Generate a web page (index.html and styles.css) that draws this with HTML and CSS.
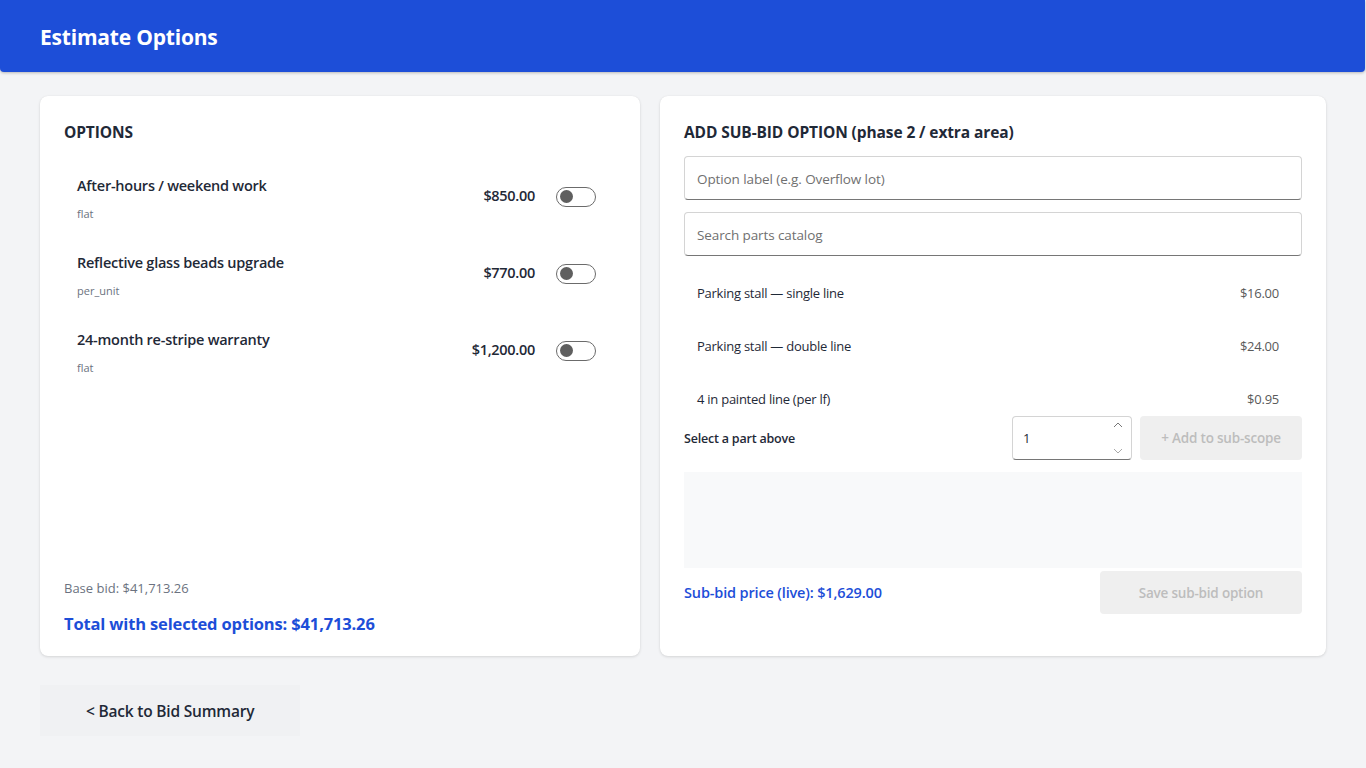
FILE: index.html
```html
<!DOCTYPE html>
<html>
<head>
<meta charset="utf-8">
<link rel="stylesheet" href="styles.css">
</head>
<body>
<header class="topbar"><h1>Estimate Options</h1></header>
<main class="content">
  <section class="card options-card">
    <h2 class="card-title">OPTIONS</h2>
    <div class="opt-list">
      <div class="opt-row">
        <div class="opt-info"><div class="opt-name">After-hours / weekend work</div><div class="opt-type">flat</div></div>
        <div class="opt-price">$850.00</div>
        <span class="toggle"><span class="knob"></span></span>
      </div>
      <div class="opt-row">
        <div class="opt-info"><div class="opt-name">Reflective glass beads upgrade</div><div class="opt-type">per_unit</div></div>
        <div class="opt-price">$770.00</div>
        <span class="toggle"><span class="knob"></span></span>
      </div>
      <div class="opt-row">
        <div class="opt-info"><div class="opt-name">24-month re-stripe warranty</div><div class="opt-type">flat</div></div>
        <div class="opt-price">$1,200.00</div>
        <span class="toggle"><span class="knob"></span></span>
      </div>
    </div>
    <div class="totals">
      <div class="base">Base bid: $41,713.26</div>
      <div class="total">Total with selected options: $41,713.26</div>
    </div>
  </section>
  <section class="card sub-card">
    <h2 class="card-title">ADD SUB-BID OPTION (phase 2 / extra area)</h2>
    <div class="field"><span class="ph">Option label (e.g. Overflow lot)</span></div>
    <div class="field"><span class="ph">Search parts catalog</span></div>
    <div class="parts">
      <div class="part"><span>Parking stall — single line</span><span class="pp">$16.00</span></div>
      <div class="part"><span>Parking stall — double line</span><span class="pp">$24.00</span></div>
      <div class="part"><span>4 in painted line (per lf)</span><span class="pp">$0.95</span></div>
    </div>
    <div class="add-row">
      <span class="sel">Select a part above</span>
      <div class="qty"><span>1</span>
        <span class="spin">
          <svg width="10" height="6" viewBox="0 0 10 6"><path d="M1 5 L5 1 L9 5" fill="none" stroke="#777" stroke-width="1"/></svg>
          <svg width="10" height="6" viewBox="0 0 10 6"><path d="M1 1 L5 5 L9 1" fill="none" stroke="#aaa" stroke-width="1"/></svg>
        </span>
      </div>
      <div class="btn-dis add-btn">+ Add to sub-scope</div>
    </div>
    <div class="scope-box"></div>
    <div class="save-row">
      <span class="live">Sub-bid price (live): $1,629.00</span>
      <div class="btn-dis save-btn">Save sub-bid option</div>
    </div>
  </section>
</main>
<div class="footer"><div class="back">&lt; Back to Bid Summary</div></div>
</body>
</html>
```
FILE: styles.css
```css
* { box-sizing: border-box; }
html, body { margin: 0; padding: 0; }
body {
  background: #f3f4f6;
  font-family: "Open Sans", "Noto Sans", sans-serif;
  color: #1f2937;
  width: 1366px;
  height: 768px;
  overflow: hidden;
}
.topbar {
  height: 72px;
  width: 1365px;
  background: #1d4ed8;
  border-radius: 0 0 4px 4px;
  box-shadow: 0 1px 3px rgba(0,0,0,0.25);
  display: flex;
  align-items: center;
  padding-left: 40px;
  padding-top: 2px;
}
.topbar h1 {
  margin: 0;
  color: #fff;
  font-size: 21px;
  font-weight: 700;
  letter-spacing: -0.2px;
}
.content {
  display: grid;
  grid-template-columns: 600px 666px;
  gap: 20px;
  padding: 24px 0 0 40px;
}
.card {
  background: #fff;
  border-radius: 8px;
  box-shadow: 0 1px 3px rgba(0,0,0,0.12), 0 0 1px rgba(0,0,0,0.08);
  height: 560px;
  padding: 24px;
}
.card-title {
  margin: 0;
  font-size: 15.5px;
  font-weight: 700;
  color: #1f2937;
  line-height: 24px;
  letter-spacing: -0.1px;
}
.options-card { display: flex; flex-direction: column; padding-bottom: 20px; }
.opt-list { padding: 0 20px 0 13px; margin-top: 28px; }
.opt-row {
  display: flex;
  height: 77px;
  align-items: flex-start;
}
.opt-info { flex: 1; }
.opt-name { font-size: 14.5px; font-weight: 600; line-height: 20px; color: #1f2937; padding-top: 4px; letter-spacing: -0.25px;}
.opt-type { font-size: 11px; color: #6b7280; margin-top: 11px; line-height: 14px; }
.opt-price { font-size: 14.5px; font-weight: 600; margin-top: 14px; margin-right: 21px; letter-spacing: -0.3px; }
.toggle {
  margin-top: 15px;
  width: 40px; height: 20px;
  border: 1.5px solid #6b6b6b;
  border-radius: 10px;
  position: relative;
  display: block;
}
.knob {
  position: absolute;
  left: 2.5px; top: 2px;
  width: 13px; height: 13px;
  border-radius: 50%;
  background: #5f5f5f;
}
.totals { margin-top: auto; }
.base { font-size: 13px; color: #6b7280; line-height: 18px; }
.total { font-size: 16.5px; font-weight: 700; color: #1d4ed8; margin-top: 15px; line-height: 24px; letter-spacing: -0.15px; }
.sub-card { display: flex; flex-direction: column; }
.field {
  height: 44px;
  border: 1px solid #d4d4d4;
  border-bottom: 1.5px solid #767676;
  border-radius: 4px;
  margin-top: 12px;
  display: flex; align-items: center;
  padding-left: 12px;
  padding-top: 1px;
}
.ph { font-size: 13.5px; color: #707070; letter-spacing: -0.1px; }
.parts { margin-top: 12px; }
.part {
  display: flex; justify-content: space-between;
  height: 53px;
  padding: 16px 23px 0 13px;
  font-size: 13px;
  color: #1f2937;
  letter-spacing: -0.25px;
}
.part .pp { color: #5a5a5a; }
.parts .part:last-child { height: 42px; padding-top: 16px; }
.add-row { display: flex; align-items: center; height: 44px; }
.sel { flex: 1; font-size: 12.5px; font-weight: 600; letter-spacing: -0.2px; }
.qty {
  width: 120px; height: 44px;
  border: 1px solid #d4d4d4;
  border-bottom: 1.5px solid #767676;
  border-radius: 4px;
  display: flex; align-items: center; justify-content: space-between;
  padding: 0 8px 0 10px;
  font-size: 13px;
}
.spin { display: flex; flex-direction: column; justify-content: space-between; height: 32px; }
.btn-dis {
  background: #efefef;
  color: #bdbdbd;
  border-radius: 4px;
  display: flex; align-items: center; justify-content: center;
  font-size: 13.5px; font-weight: 600;
  letter-spacing: -0.2px;
}
.add-btn { width: 162px; height: 44px; margin-left: 8px; }
.scope-box { height: 96px; background: #f8f9fa; margin-top: 12px; }
.save-row { display: flex; align-items: center; justify-content: space-between; margin-top: 3px; }
.live { font-size: 14.5px; color: #1d4ed8; font-weight: 600; letter-spacing: -0.15px; }
.save-btn { width: 202px; height: 43px; }
.footer { padding: 29px 0 0 40px; }
.back {
  width: 260px; height: 51px;
  background: #f0f1f3;
  display: flex; align-items: center;
  padding-left: 46px;
  font-size: 15.5px; font-weight: 600; color: #1f2937;
  letter-spacing: -0.2px;
}
```
